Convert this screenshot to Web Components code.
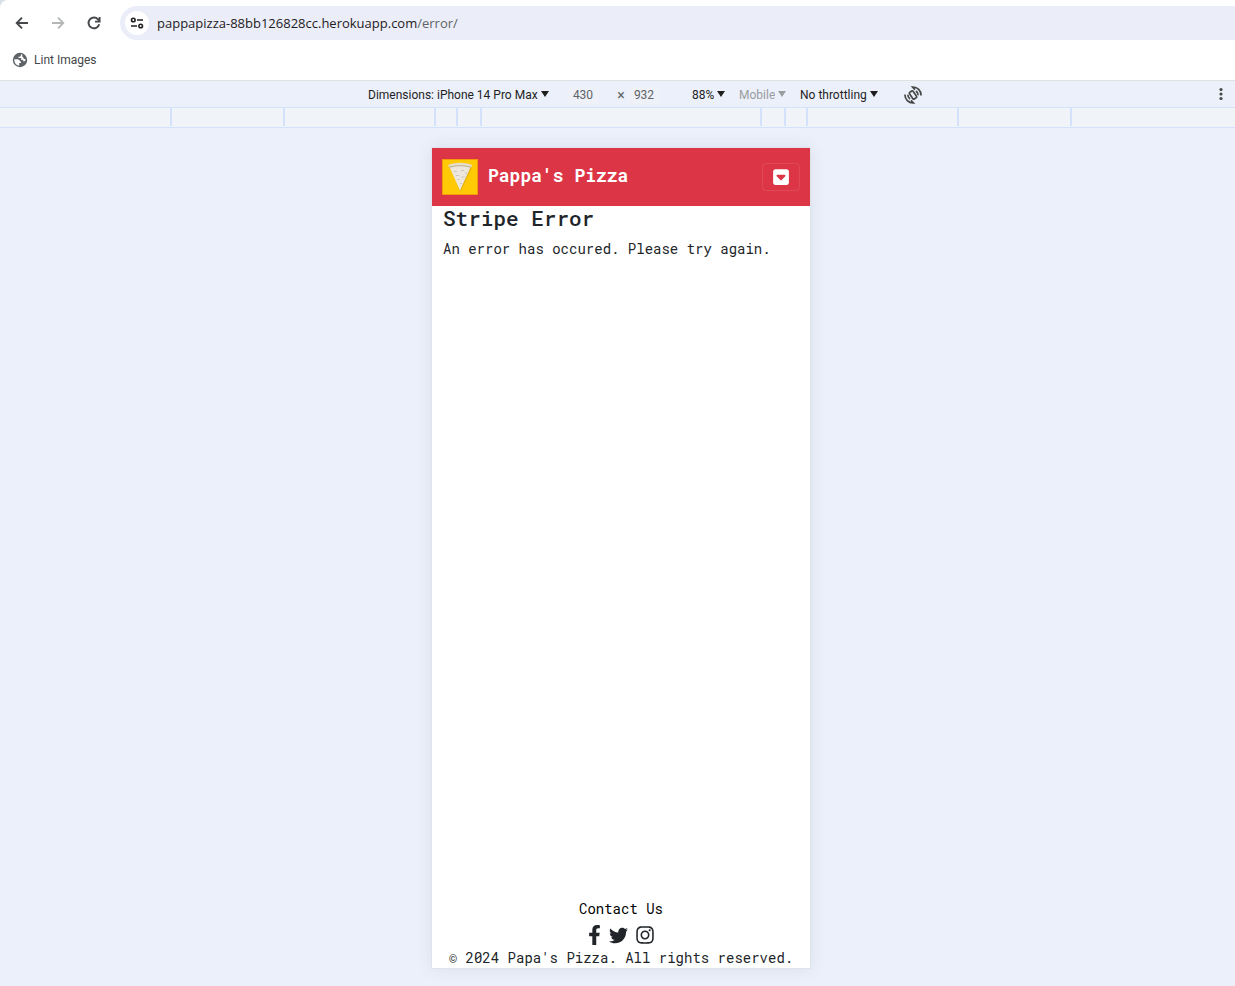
<!DOCTYPE html>
<html lang="en">
<head>
<meta charset="utf-8">
<title>Pappa's Pizza</title>
<style>
  html, body { margin: 0; }
  body { background: #ebf0fa; font-family: "Segoe UI", "Open Sans", sans-serif; }
</style>
</head>
<body>
<browser-window>
  <browser-toolbar slot="chrome"></browser-toolbar>
  <device-toolbar slot="chrome"></device-toolbar>
  <media-ruler slot="chrome"></media-ruler>
  <device-frame>
    <pizza-navbar>Pappa's Pizza</pizza-navbar>
    <error-message>
      <span slot="title">Stripe Error</span>
      An error has occured. Please try again.
    </error-message>
    <pizza-footer></pizza-footer>
  </device-frame>
</browser-window>

<script>
const define = (name, html) => {
  customElements.define(name, class extends HTMLElement {
    constructor() {
      super();
      this.attachShadow({ mode: "open" }).innerHTML = html;
    }
  });
};

define("browser-window", `
  <style>
    :host { display: flex; flex-direction: column; min-height: 100vh; }
    main { flex: 1; display: flex; justify-content: center; padding: 20px 0 18px 7px; }
  </style>
  <header><slot name="chrome"></slot></header>
  <main><slot></slot></main>
`);

define("browser-toolbar", `
  <style>
    :host { display: block; background: #d9dfe8; }
    .bars { background: #fff; border-top-left-radius: 8px; border-bottom: 1px solid #e0e1e3; }
    .nav { display: flex; align-items: center; padding: 6px 0 0 12px; }
    button { border: 0; background: none; padding: 0; width: 20px; height: 20px; margin-right: 16px; color: #45474a; }
    button:disabled { color: #b4b5b7; }
    svg { display: block; }
    .address { flex: 1; display: flex; align-items: center; height: 34px; background: #ebeef8; border-radius: 17px 0 0 17px; padding-left: 5px; }
    .address button { width: 24px; height: 24px; border-radius: 12px; background: #fff; margin-right: 8px; color: #1f1f1f; }
    .url { font-size: 13px; line-height: 20px; color: #5f6368; }
    .url b { font-weight: 400; color: #1f2023; }
    .bookmarks { display: flex; padding: 10px 12px; }
    a { display: flex; align-items: center; gap: 6px; font: 12px/20px Roboto, sans-serif; color: #45474a; text-decoration: none; }
  </style>
  <div class="bars">
    <nav class="nav" aria-label="Browser">
      <button aria-label="Back"><svg width="20" height="20" viewBox="0 0 20 20" fill="none" stroke="currentColor" stroke-width="1.9"><path d="M16 10H5M10 4.6 4.7 10l5.3 5.4"/></svg></button>
      <button aria-label="Forward" disabled><svg width="20" height="20" viewBox="0 0 20 20" fill="none" stroke="currentColor" stroke-width="1.8"><path d="M4 10h11M10 4.6l5.3 5.4-5.3 5.4"/></svg></button>
      <button aria-label="Reload"><svg width="20" height="20" viewBox="0 0 20 20" fill="none" stroke="currentColor" stroke-width="1.9"><path d="M15.2 11.2A5.4 5.4 0 1 1 14 6.3l1.600 1.900M15.600 4v4.600H11"/></svg></button>
      <div class="address">
        <button aria-label="Site information"><svg width="24" height="24" viewBox="0 0 24 24" fill="none" stroke="currentColor" stroke-width="1.6"><circle cx="8.3" cy="9" r="1.8"/><path d="M12 9h6M6 15h6"/><circle cx="15.7" cy="15" r="1.8"/></svg></button>
        <span class="url"><b>pappapizza-88bb126828cc.herokuapp.com</b>/error/</span>
      </div>
    </nav>
    <div class="bookmarks">
      <a href="#"><svg width="16" height="16" viewBox="0 0 16 16"><circle cx="8" cy="8" r="7.200" fill="#5f6368"/><path d="M2.300 7.300h3.200c1.500 0 2.500 1 2.500 2.300h1v1.500H7.200v2.600C4.300 13.400 2.100 11 2.300 7.300zM8.900 2.300v1.200c0 .7-.6 1.200-1.300 1.200H6.500v1.400h2.700v1.900h2v1.300h1.600c.4-.8.800-1.500.8-2.300-1.200.3-2.300-.2-2.300-1.300V4.900h-1V2.600z" fill="#fff"/></svg>Lint Images</a>
    </div>
  </div>
`);

define("device-toolbar", `
  <style>
    :host { display: flex; align-items: center; height: 26px; padding-left: 55px; background: #ebf0fa; border-bottom: 1px solid #d3e1fb; font: 12px/16px Roboto, sans-serif; color: #1f1f1f; }
    .controls { display: grid; grid-template-columns: 184px 62px 14px 64px 47px 61px 104px 18px; align-items: center; padding-top: 2px; }
    .side { flex: 1; display: flex; justify-content: flex-end; }
    .menu { display: flex; align-items: center; gap: 3px; }
    .muted { color: #9b9da1; }
    select, input { appearance: none; border: 0; padding: 0; margin: 0; background: none; font: inherit; color: inherit; opacity: 1; }
    select { field-sizing: content; height: 18px; }
    input { width: 32px; height: 18px; text-align: center; color: #5f6368; background: #eef1f8; }
    .width { justify-self: center; }
    .times { text-align: center; color: #5f6368; font-size: 14px; }
    button { border: 0; padding: 0; background: none; color: #474747; }
    .more { width: 28px; }
    svg { display: block; flex: none; pointer-events: none; margin: 0 auto; }
    .menu svg { margin: 0 0 2px; }
  </style>
  <div class="side"></div>
  <div class="controls">
    <div class="menu"><select aria-label="Device"><option>Dimensions: iPhone 14 Pro Max</option></select><svg width="8" height="8" viewBox="0 0 8 8" fill="currentColor"><path d="M0 1h8L4 7z"/></svg></div>
    <input class="width" aria-label="Width" value="430">
    <span class="times">×</span>
    <input aria-label="Height" value="932">
    <div class="menu"><select aria-label="Zoom"><option>88%</option></select><svg width="8" height="8" viewBox="0 0 8 8" fill="currentColor"><path d="M0 1h8L4 7z"/></svg></div>
    <div class="menu muted"><select aria-label="Device type" disabled><option>Mobile</option></select><svg width="8" height="8" viewBox="0 0 8 8" fill="currentColor"><path d="M0 1h8L4 7z"/></svg></div>
    <div class="menu"><select aria-label="Throttling"><option>No throttling</option></select><svg width="8" height="8" viewBox="0 0 8 8" fill="currentColor"><path d="M0 1h8L4 7z"/></svg></div>
    <button aria-label="Rotate"><svg width="18" height="18" viewBox="0 0 18 18" fill="none" stroke="currentColor" stroke-width="1.700"><rect x="6.800" y="5" width="4.400" height="8" rx="1" transform="rotate(-35 9 9)"/><path d="M1 8.500a8 8 0 0 0 8.500 8.500L7 14.300M17 9.500A8 8 0 0 0 8.500 1L11 3.700M3.800 8.800a5.500 5.500 0 0 0 2.200 4.200M14.200 9.200A5.500 5.500 0 0 0 12 5"/></svg></button>
  </div>
  <div class="side"><button class="more" aria-label="More options"><svg width="4" height="14" viewBox="0 0 4 14" fill="currentColor"><circle cx="2" cy="2.500" r="1.600"/><circle cx="2" cy="7" r="1.600"/><circle cx="2" cy="11.500" r="1.600"/></svg></button></div>
`);

define("media-ruler", `
  <style>
    :host { display: flex; justify-content: center; height: 19px; padding-left: 7px; overflow: hidden; background: #f0f4f9; border-bottom: 1px solid #d3e1fb; }
    i { flex: none; box-sizing: border-box; height: 18px; border-left: 2px solid #d3e1fb; }
    .laptop { width: 113px; }
    .tablet { width: 151px; }
    .large { width: 22px; }
    .medium { width: 24px; }
    .small { width: 280px; }
    .end { width: 2px; }
  </style>
  <i class="laptop"></i><i class="tablet"></i><i class="large"></i><i class="medium"></i><i class="small"></i><i class="medium"></i><i class="large"></i><i class="tablet"></i><i class="laptop"></i><i class="end"></i>
`);

define("device-frame", `
  <style>
    :host { display: flex; flex-direction: column; width: 378px; max-width: 100%; background: #fff; color: #212529;
      font-family: "Roboto Mono", "Liberation Mono", monospace; font-size: 14px; line-height: 21px;
      box-shadow: 0 0 0 1px #dfe3ea, 0 0 16px rgba(60, 64, 67, .1); }
  </style>
  <slot></slot>
`);

define("pizza-navbar", `
  <style>
    :host { display: flex; align-items: center; justify-content: space-between; height: 58px; padding: 0 10px; background: #dc3545; }
    a { display: flex; align-items: center; gap: 10px; color: #fff; font-size: 18px; line-height: 26px; font-weight: 700; text-decoration: none; }
    span { padding-bottom: 4px; }
    svg { display: block; }
    button { display: flex; align-items: center; justify-content: center; width: 38px; height: 28px; padding: 0; background: none; border: 1px solid rgba(255, 255, 255, .1); border-radius: 4px; color: #fff; }
  </style>
  <a href="#">
    <svg width="36" height="36" viewBox="0 0 36 36" role="img" aria-label="Pizza slice">
      <rect width="36" height="36" fill="#f59b0b"/><rect x="1" y="1" width="34" height="34" fill="#ffc905"/>
      <path d="M8.500 9 18.500 32.500 29.500 9z" fill="#e0ab08"/>
      <path d="M7.500 8 18 31.500 28.700 8q-10-3.500-21.200 0z" fill="#ece6dc"/>
      <path d="M6.500 8V5.800q11.500-4.200 23.200 0V8q-11.500-3.300-23.200 0z" fill="#e5ddd0"/>
      <path d="M7 8.300q11-3.300 22.200 0" fill="none" stroke="#b5a995" stroke-width=".9"/>
      <path d="M12 12.500h3M19 11.500h3M23 14h2M14 16.500h3M19.500 18h3M15.500 20.500h2M18 24.500h2" stroke="#cdc6b9" fill="none"/>
    </svg>
    <span><slot></slot></span>
  </a>
  <button aria-label="Toggle navigation"><svg width="18" height="18" viewBox="0 0 448 512" fill="currentColor"><path d="M384 480c35.300 0 64-28.700 64-64V96c0-35.300-28.700-64-64-64H64C28.700 32 0 60.700 0 96v320c0 35.300 28.700 64 64 64h320zM224 352c-6.700 0-13-2.800-17.600-7.700l-104-112c-6.500-7-8.200-17.200-4.400-25.900S110.500 192 120 192h208c9.500 0 18.200 5.700 22 14.400s2.100 18.900-4.400 25.900l-104 112c-4.500 4.900-10.900 7.700-17.600 7.700z"/></svg></button>
`);

define("error-message", `
  <style>
    :host { display: block; flex: 1; padding: 0 11px; }
    h1 { margin: 0 0 8px; font-size: 21px; line-height: 24px; font-weight: 500; }
    p { margin: 0; }
  </style>
  <h1><slot name="title"></slot></h1>
  <p><slot></slot></p>
`);

define("pizza-footer", `
  <style>
    :host { display: block; text-align: center; }
    p { margin: 0; }
    .contact { color: #000; }
    .social { display: flex; justify-content: center; align-items: flex-end; gap: 8px; height: 26px; padding-bottom: 2px; }
    a { color: #212529; }
    svg { display: block; }
  </style>
  <p class="contact">Contact Us</p>
  <div class="social">
    <a href="#" aria-label="Facebook"><svg width="13" height="20" viewBox="0 0 320 512" fill="currentColor"><path d="M279.140 288l14.220-92.660h-88.910v-60.130c0-25.350 12.420-50.060 52.240-50.060h40.420V6.260S260.430 0 225.360 0c-73.220 0-121.080 44.380-121.080 124.720v70.620H22.890V288h81.390v224h100.170V288z"/></svg></a>
    <a href="#" aria-label="Twitter"><svg width="19" height="19" viewBox="0 0 512 512" fill="currentColor"><path d="M459.370 151.716c.325 4.548.325 9.097.325 13.645 0 138.720-105.583 298.558-298.558 298.558-59.452 0-114.680-17.219-161.137-47.106 8.447.974 16.568 1.299 25.340 1.299 49.055 0 94.213-16.568 130.274-44.832-46.132-.975-84.792-31.188-98.112-72.772 6.498.974 12.995 1.624 19.818 1.624 9.421 0 18.843-1.300 27.614-3.573-48.081-9.747-84.143-51.980-84.143-102.985v-1.299c13.969 7.797 30.214 12.670 47.431 13.319-28.264-18.843-46.781-51.005-46.781-87.391 0-19.492 5.197-37.360 14.294-52.954 51.655 63.675 129.300 105.258 216.365 109.807-1.624-7.797-2.599-15.918-2.599-24.040 0-57.828 46.782-104.934 104.934-104.934 30.213 0 57.502 12.670 76.670 33.137 23.715-4.548 46.456-13.320 66.599-25.340-7.798 24.366-24.366 44.833-46.132 57.827 21.117-2.273 41.584-8.122 60.426-16.243-14.292 20.791-32.161 39.308-52.628 54.253z"/></svg></a>
    <a href="#" aria-label="Instagram"><svg width="18" height="20" viewBox="0 0 448 512" fill="currentColor"><path d="M224.100 141c-63.600 0-114.900 51.300-114.900 114.900s51.300 114.900 114.900 114.900S339 319.500 339 255.900 287.700 141 224.100 141zm0 189.600c-41.100 0-74.700-33.500-74.700-74.700s33.500-74.700 74.700-74.700 74.700 33.500 74.700 74.700-33.600 74.700-74.700 74.700zm146.400-194.300c0 14.900-12 26.800-26.800 26.800-14.900 0-26.800-12-26.800-26.800s12-26.800 26.800-26.800 26.800 12 26.800 26.800zm76.100 27.200c-1.700-35.900-9.900-67.700-36.200-93.900-26.200-26.200-58-34.400-93.900-36.200-37-2.100-147.900-2.100-184.900 0-35.800 1.700-67.600 9.900-93.900 36.100s-34.400 58-36.200 93.900c-2.100 37-2.100 147.900 0 184.900 1.700 35.900 9.900 67.700 36.200 93.900s58 34.400 93.900 36.200c37 2.100 147.900 2.100 184.900 0 35.900-1.700 67.700-9.900 93.900-36.200 26.200-26.200 34.400-58 36.200-93.900 2.100-37 2.100-147.800 0-184.800zM398.800 388c-7.800 19.600-22.900 34.700-42.600 42.600-29.500 11.700-99.500 9-132.100 9s-102.700 2.600-132.100-9c-19.600-7.800-34.700-22.900-42.600-42.600-11.700-29.500-9-99.500-9-132.100s-2.600-102.700 9-132.100c7.800-19.600 22.900-34.700 42.600-42.600 29.500-11.700 99.500-9 132.100-9s102.700-2.600 132.100 9c19.600 7.800 34.700 22.900 42.600 42.600 11.700 29.500 9 99.500 9 132.100s2.700 102.700-9 132.100z"/></svg></a>
  </div>
  <p>© 2024 Papa's Pizza. All rights reserved.</p>
`);
</script>
</body>
</html>
